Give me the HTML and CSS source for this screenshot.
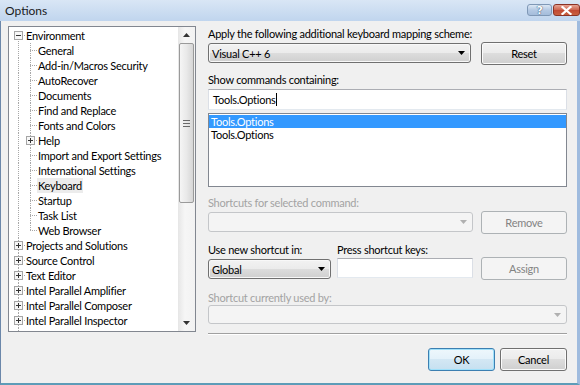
FILE: index.html
```html
<!DOCTYPE html>
<html lang="en">
<head>
  <meta charset="UTF-8" />
  <title>Options</title>
  <link rel="stylesheet" href="styles.css">
</head>
<body>
  <div class="window">
    <div class="titlebar">
      <span class="title">Options</span>
      <div class="caption-btns">
        <span class="cap-btn cap-help">?</span>
        <span class="cap-btn cap-close">
          <svg width="11" height="9" viewBox="0 0 11 9"><path d="M1.5 1 L9.5 8 M9.5 1 L1.5 8" stroke="#fff" stroke-width="2.2" stroke-linecap="square"/></svg>
        </span>
      </div>
    </div>

    <div class="client">
      <div class="main">
        <div class="tree">
          <div class="tree-items">
            <div class="node"><span class="ln first"><svg class="box" width="9" height="9" viewBox="0 0 9 9"><rect x="0.5" y="0.5" width="8" height="8" fill="#f7f7f7" stroke="#a5a5a5"/><path d="M2 4.5 H7" stroke="#333"/></svg></span><span class="label">Environment</span></div>
            <div class="node"><span class="ln pipe"></span><span class="ln tee"></span><span class="label">General</span></div>
            <div class="node"><span class="ln pipe"></span><span class="ln tee"></span><span class="label">Add-in/Macros Security</span></div>
            <div class="node"><span class="ln pipe"></span><span class="ln tee"></span><span class="label">AutoRecover</span></div>
            <div class="node"><span class="ln pipe"></span><span class="ln tee"></span><span class="label">Documents</span></div>
            <div class="node"><span class="ln pipe"></span><span class="ln tee"></span><span class="label">Find and Replace</span></div>
            <div class="node"><span class="ln pipe"></span><span class="ln tee"></span><span class="label">Fonts and Colors</span></div>
            <div class="node"><span class="ln pipe"></span><span class="ln tee"><svg class="box" width="9" height="9" viewBox="0 0 9 9"><rect x="0.5" y="0.5" width="8" height="8" fill="#f7f7f7" stroke="#a5a5a5"/><path d="M2 4.5 H7 M4.5 2 V7" stroke="#333"/></svg></span><span class="label">Help</span></div>
            <div class="node"><span class="ln pipe"></span><span class="ln tee"></span><span class="label">Import and Export Settings</span></div>
            <div class="node"><span class="ln pipe"></span><span class="ln tee"></span><span class="label">International Settings</span></div>
            <div class="node"><span class="ln pipe"></span><span class="ln tee"></span><span class="label selected">Keyboard</span></div>
            <div class="node"><span class="ln pipe"></span><span class="ln tee"></span><span class="label">Startup</span></div>
            <div class="node"><span class="ln pipe"></span><span class="ln tee"></span><span class="label">Task List</span></div>
            <div class="node"><span class="ln pipe"></span><span class="ln end"></span><span class="label">Web Browser</span></div>
            <div class="node"><span class="ln tee"><svg class="box" width="9" height="9" viewBox="0 0 9 9"><rect x="0.5" y="0.5" width="8" height="8" fill="#f7f7f7" stroke="#a5a5a5"/><path d="M2 4.5 H7 M4.5 2 V7" stroke="#333"/></svg></span><span class="label">Projects and Solutions</span></div>
            <div class="node"><span class="ln tee"><svg class="box" width="9" height="9" viewBox="0 0 9 9"><rect x="0.5" y="0.5" width="8" height="8" fill="#f7f7f7" stroke="#a5a5a5"/><path d="M2 4.5 H7 M4.5 2 V7" stroke="#333"/></svg></span><span class="label">Source Control</span></div>
            <div class="node"><span class="ln tee"><svg class="box" width="9" height="9" viewBox="0 0 9 9"><rect x="0.5" y="0.5" width="8" height="8" fill="#f7f7f7" stroke="#a5a5a5"/><path d="M2 4.5 H7 M4.5 2 V7" stroke="#333"/></svg></span><span class="label">Text Editor</span></div>
            <div class="node"><span class="ln tee"><svg class="box" width="9" height="9" viewBox="0 0 9 9"><rect x="0.5" y="0.5" width="8" height="8" fill="#f7f7f7" stroke="#a5a5a5"/><path d="M2 4.5 H7 M4.5 2 V7" stroke="#333"/></svg></span><span class="label">Intel Parallel Amplifier</span></div>
            <div class="node"><span class="ln tee"><svg class="box" width="9" height="9" viewBox="0 0 9 9"><rect x="0.5" y="0.5" width="8" height="8" fill="#f7f7f7" stroke="#a5a5a5"/><path d="M2 4.5 H7 M4.5 2 V7" stroke="#333"/></svg></span><span class="label">Intel Parallel Composer</span></div>
            <div class="node"><span class="ln tee"><svg class="box" width="9" height="9" viewBox="0 0 9 9"><rect x="0.5" y="0.5" width="8" height="8" fill="#f7f7f7" stroke="#a5a5a5"/><path d="M2 4.5 H7 M4.5 2 V7" stroke="#333"/></svg></span><span class="label">Intel Parallel Inspector</span></div>
            <div class="node"><span class="ln tee"><svg class="box" width="9" height="9" viewBox="0 0 9 9"><rect x="0.5" y="0.5" width="8" height="8" fill="#f7f7f7" stroke="#a5a5a5"/><path d="M2 4.5 H7 M4.5 2 V7" stroke="#333"/></svg></span><span class="label">Database Tools</span></div>
          </div>
          <div class="vscroll">
            <div class="sb-btn"><svg width="7" height="4" viewBox="0 0 7 4"><path d="M0 4 L3.5 0 L7 4 Z" fill="#333"/></svg></div>
            <div class="sb-track">
              <div class="sb-thumb"><span class="grip"></span></div>
            </div>
            <div class="sb-btn"><svg width="7" height="4" viewBox="0 0 7 4"><path d="M0 0 L3.5 4 L7 0 Z" fill="#333"/></svg></div>
          </div>
        </div>

        <div class="panel">
          <div class="label-text">Apply the following additional keyboard mapping scheme:</div>
          <div class="row row-scheme">
            <div class="combo combo-scheme"><span>Visual C++ 6</span><svg width="7" height="4" viewBox="0 0 7 4"><path d="M0 0 L3.5 4 L7 0 Z" fill="#000"/></svg></div>
            <span class="btn">Reset</span>
          </div>

          <div class="label-text lbl-show">Show commands containing:</div>
          <div class="textbox tb-cmd">Tools.Options<span class="caret"></span></div>
          <div class="listbox">
            <div class="item selected">Tools.Options</div>
            <div class="item">Tools.Options</div>
          </div>

          <div class="label-text disabled lbl-shortcuts">Shortcuts for selected command:</div>
          <div class="row row-shortcuts">
            <div class="combo disabled combo-shortcuts"><span></span><svg width="7" height="4" viewBox="0 0 7 4"><path d="M0 0 L3.5 4 L7 0 Z" fill="#b0b0b0"/></svg></div>
            <span class="btn disabled">Remove</span>
          </div>

          <div class="row row-labels">
            <div class="label-text col-scope">Use new shortcut in:</div>
            <div class="label-text">Press shortcut keys:</div>
          </div>
          <div class="row row-assign">
            <div class="combo combo-global"><span>Global</span><svg width="7" height="4" viewBox="0 0 7 4"><path d="M0 0 L3.5 4 L7 0 Z" fill="#000"/></svg></div>
            <div class="textbox tb-keys"></div>
            <span class="btn disabled">Assign</span>
          </div>

          <div class="label-text disabled lbl-used">Shortcut currently used by:</div>
          <div class="combo disabled combo-used"><span></span><svg width="7" height="4" viewBox="0 0 7 4"><path d="M0 0 L3.5 4 L7 0 Z" fill="#b0b0b0"/></svg></div>
          <div class="separator"></div>
        </div>
      </div>

      <div class="footer">
        <span class="btn btn-default">OK</span>
        <span class="btn">Cancel</span>
      </div>
    </div>
  </div>
</body>
</html>
```

FILE: styles.css
```css
body {
  margin: 0;
  font-family: Lato, "Noto Sans", sans-serif;
  font-size: 11px;
  letter-spacing: -0.25px;
  color: #000;
  background: #f0f0f0;
}
.window {
  width: 580px;
  height: 385px;
  display: flex;
  flex-direction: column;
  background: #bcd2ec;
}
.titlebar {
  height: 21px;
  display: flex;
  align-items: flex-start;
  justify-content: space-between;
  background: linear-gradient(#d9e6f5, #c0d5ee);
}
.title {
  font-size: 12px;
  line-height: 12px;
  letter-spacing: 0;
  padding: 5px 0 0 5px;
  color: #1a1a1a;
}
.caption-btns {
  display: flex;
  gap: 1px;
  margin-top: 4px;
}
.cap-btn {
  height: 12px;
  border-radius: 3px;
  display: flex;
  align-items: center;
  justify-content: center;
  box-sizing: border-box;
}
.cap-help {
  width: 25px;
  border: 1px solid #7f98b6;
  background: linear-gradient(#dce7f4, #b4c9e3 50%, #a4bcdb);
  color: #fff;
  font-family: "DejaVu Sans", sans-serif;
  font-weight: bold;
  font-size: 11px;
  text-shadow: 0 0 1px #33506f, 0 0 1px #33506f;
}
.cap-close {
  width: 27px;
  border: 1px solid #8a3326;
  background: linear-gradient(#e6a494, #cf6a55 45%, #c24a34 55%, #c8603f);
}

.client {
  flex: 1;
  display: flex;
  flex-direction: column;
  background: #f0f0f0;
  border-left: 1px solid #6b87aa;
  border-right: 3px solid #9fbbde;
  border-bottom: 2px solid #5d9cb8;
}
.main {
  display: flex;
  gap: 12px;
  padding: 5px 0 0 7px;
}

/* tree */
.tree {
  width: 188px;
  height: 306px;
  box-sizing: border-box;
  border: 1px solid #828790;
  background: #fff;
  display: flex;
}
.tree-items {
  flex: 1;
  overflow: hidden;
  padding: 1px 0 0 4px;
}
.node {
  display: flex;
  height: 15px;
  line-height: 15px;
  white-space: nowrap;
}
.ln {
  width: 12px;
  height: 15px;
  flex: none;
  display: flex;
  align-items: center;
}
.ln .box {
  margin-left: 1px;
}
.ln.pipe {
  background: repeating-linear-gradient(to bottom, #a8a8a8 0 1px, transparent 1px 2px) 5px 0 / 1px 100% no-repeat;
}
.ln.tee {
  background:
    repeating-linear-gradient(to bottom, #a8a8a8 0 1px, transparent 1px 2px) 5px 0 / 1px 100% no-repeat,
    repeating-linear-gradient(to right, #a8a8a8 0 1px, transparent 1px 2px) 5px 7px / 7px 1px no-repeat;
}
.ln.end {
  background:
    repeating-linear-gradient(to bottom, #a8a8a8 0 1px, transparent 1px 2px) 5px 0 / 1px 8px no-repeat,
    repeating-linear-gradient(to right, #a8a8a8 0 1px, transparent 1px 2px) 5px 7px / 7px 1px no-repeat;
}
.ln.first {
  background:
    repeating-linear-gradient(to bottom, #a8a8a8 0 1px, transparent 1px 2px) 5px 7px / 1px 8px no-repeat,
    repeating-linear-gradient(to right, #a8a8a8 0 1px, transparent 1px 2px) 5px 7px / 7px 1px no-repeat;
}
.label {
  padding: 0 1px;
}
.label.selected {
  background: #ececec;
}

.vscroll {
  width: 17px;
  flex: none;
  display: flex;
  flex-direction: column;
  background: linear-gradient(to right, #e6e6e6, #f6f6f6 40%, #f2f2f2);
}
.sb-btn {
  height: 16px;
  display: flex;
  align-items: center;
  justify-content: center;
}
.sb-track {
  flex: 1;
  padding: 0 1px;
}
.sb-thumb {
  height: 160px;
  box-sizing: border-box;
  border: 1px solid #9a9a9a;
  border-radius: 2px;
  background: linear-gradient(to right, #f5f5f5, #e9e9e9 50%, #d6d6d6);
  display: flex;
  align-items: center;
  justify-content: center;
}
.grip {
  width: 7px;
  height: 5px;
  border-top: 1px solid #6a6a6a;
  border-bottom: 1px solid #6a6a6a;
  background: linear-gradient(#6a6a6a, #6a6a6a) 0 2px / 7px 1px no-repeat;
}

/* right panel */
.panel {
  width: 359px;
  display: flex;
  flex-direction: column;
}
.label-text {
  height: 15px;
  line-height: 15px;
  white-space: nowrap;
}
.label-text.disabled {
  color: #a3a3a3;
}
.row {
  display: flex;
  align-items: flex-start;
}
.row-scheme {
  margin-top: 1px;
  gap: 10px;
}
.combo {
  box-sizing: border-box;
  height: 20px;
  border: 1px solid #707070;
  border-radius: 3px;
  background: linear-gradient(#f2f2f2, #ebebeb 50%, #dddddd 50%, #cfcfcf);
  box-shadow: inset 0 0 0 1px #f8f8f8;
  display: flex;
  align-items: center;
  justify-content: space-between;
  padding: 0 5px 0 3px;
}
.combo.disabled {
  border-color: #c4c6c9;
  background: #f4f4f4;
  box-shadow: none;
}
.combo-scheme {
  width: 263px;
  margin-top: 1px;
}
.btn {
  box-sizing: border-box;
  width: 86px;
  height: 23px;
  border: 1px solid #707070;
  border-radius: 3px;
  background: linear-gradient(#f2f2f2, #ebebeb 50%, #dddddd 50%, #cfcfcf);
  box-shadow: inset 0 0 0 1px #fbfbfb;
  display: flex;
  align-items: center;
  justify-content: center;
}
.btn.disabled {
  border-color: #adb2b5;
  background: #f4f4f4;
  box-shadow: none;
  color: #838383;
}
.lbl-show {
  margin-top: 7px;
}
.textbox {
  box-sizing: border-box;
  background: #fff;
  border: 1px solid #abadb3;
  border-left-color: #dbdfe6;
  border-right-color: #dbdfe6;
  border-bottom-color: #e3e9ef;
  display: flex;
  align-items: center;
}
.tb-cmd {
  height: 21px;
  margin-top: 2px;
  padding-left: 4px;
}
.caret {
  width: 1px;
  height: 13px;
  background: #000;
}
.listbox {
  box-sizing: border-box;
  height: 74px;
  margin-top: 3px;
  border: 1px solid #828790;
  background: #fff;
  padding: 1px 0;
}
.item {
  height: 13px;
  line-height: 13px;
  padding-left: 2px;
}
.item.selected {
  background: #3399ff;
  color: #fff;
}
.lbl-shortcuts {
  margin-top: 8px;
}
.row-shortcuts {
  margin-top: 1px;
  gap: 8px;
}
.combo-shortcuts {
  width: 265px;
  margin-top: 1px;
}
.row-labels {
  margin-top: 8px;
}
.col-scope {
  width: 129px;
}
.row-assign {
  gap: 0;
}
.combo-global {
  width: 123px;
  margin-top: 2px;
  margin-right: 6px;
}
.tb-keys {
  width: 136px;
  height: 20px;
  margin-top: 1px;
  margin-right: 8px;
}
.lbl-used {
  margin-top: 10px;
}
.combo-used {
  height: 19px;
}
.separator {
  margin-top: 9px;
  height: 1px;
  background: #a0a0a0;
  border-bottom: 1px solid #fff;
}

.footer {
  display: flex;
  justify-content: flex-end;
  gap: 5px;
  padding: 13px 10px 0 0;
}
.footer .btn {
  width: 67px;
}
.btn-default {
  border-color: #3c7fb1;
  box-shadow: inset 0 0 0 1px #9fe0fa;
  background: linear-gradient(#eef7fc, #e3f1fa 50%, #d3e7f4 50%, #c6e0f0);
}
```
